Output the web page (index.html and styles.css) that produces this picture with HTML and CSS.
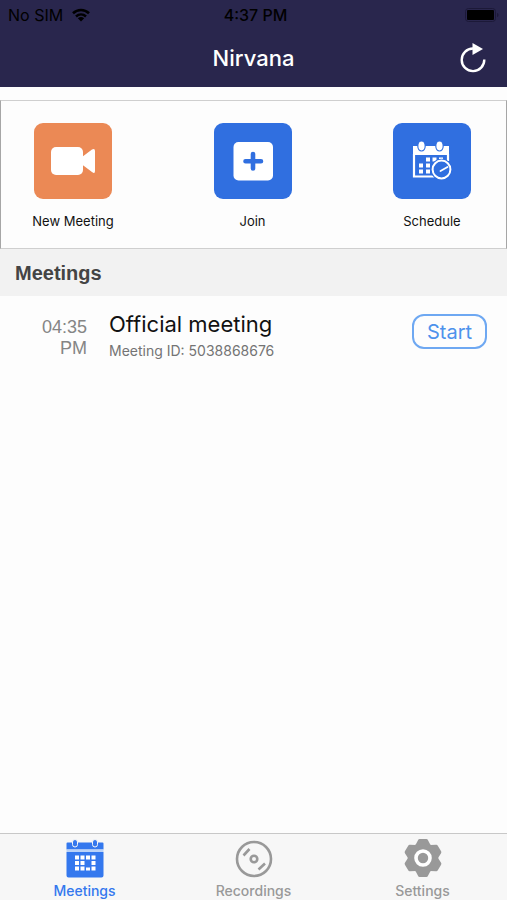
FILE: index.html
```html
<!DOCTYPE html>
<html lang="en">
<head>
<meta charset="utf-8">
<meta name="viewport" content="width=device-width, initial-scale=1">
<title>Nirvana</title>
<link rel="stylesheet" href="styles.css">
</head>
<body>
<header class="header">
  <div class="status">
    <div class="carrier">
      <span>No SIM</span>
      <svg width="20" height="14" viewBox="0 0 20 14" aria-hidden="true">
        <path d="M2 5.2C6.6 .9 13.4 .9 18 5.2M5 8.4c3-2.6 7-2.6 10 0" fill="none" stroke="#000" stroke-width="2.6"/>
        <path d="M6.8 10.2c2-1.5 4.400-1.500 6.400 0L10 13.500z"/>
      </svg>
    </div>
    <span class="clock">4:37 PM</span>
    <svg class="battery" width="34" height="14" viewBox="0 0 34 14" aria-hidden="true">
      <rect x=".5" y=".5" width="30" height="13" rx="3" fill="none" stroke="#1c1938"/>
      <rect x="2" y="2" width="27" height="10" rx="1"/>
      <path d="M32 5c2 .5 2 3.500 0 4z" fill="#1c1938"/>
    </svg>
  </div>
  <div class="titlebar">
    <h1 class="title">Nirvana</h1>
    <button class="refresh" type="button" aria-label="Refresh">
      <svg width="28" height="32" viewBox="0 0 28 32" aria-hidden="true">
        <path d="M14 6.500A11.300 11.300 0 1 0 25.300 17.500" fill="none" stroke="#fff" stroke-width="2.400"/>
        <path d="M13.500 1v12L24 7z" fill="#fff"/>
      </svg>
    </button>
  </div>
</header>
<main class="main">
  <div class="actions">
    <button class="action" type="button">
      <svg class="tile tile-new" viewBox="0 0 78 76" aria-hidden="true">
        <rect x="17" y="24" width="32" height="28" rx="5" fill="#fff"/>
        <path d="M48 34L58 26.500Q61 25 61 28V48Q61 51.500 58 49L48 41.500z" fill="#fff"/>
      </svg>
      <span>New Meeting</span>
    </button>
    <button class="action" type="button">
      <svg class="tile" viewBox="0 0 78 76" aria-hidden="true">
        <rect x="19.500" y="19" width="39.500" height="38.500" rx="5" fill="#fff"/>
        <path d="M39 31v14.500M31.500 38.200h15.500" stroke="#306fe0" stroke-width="4.600" stroke-linecap="round"/>
      </svg>
      <span>Join</span>
    </button>
    <button class="action" type="button">
      <svg class="tile" viewBox="0 0 78 76" aria-hidden="true">
        <path d="M20 23h36v9H20z" fill="#fff"/>
        <path d="M21 31v22.500h22M55 31v7" fill="none" stroke="#fff" stroke-width="2.200"/>
        <g fill="#fff" stroke="#306fe0" stroke-width="1.200"><ellipse cx="28.500" cy="23" rx="3.700" ry="5"/><ellipse cx="46.500" cy="23" rx="3.700" ry="5"/></g>
        <path d="M33 34.500h4v4h-4zM39.500 34.500h4v4h-4zM46 34.500h4v3h-4zM26 40.500h4v4h-4zM33 40.500h4v4h-4zM26 46.500h4v4h-4zM33 46.500h4v4h-4z" fill="#fff"/>
        <circle cx="48.500" cy="46.500" r="10.800" fill="#306fe0"/>
        <circle cx="48.500" cy="46.500" r="8.900" fill="none" stroke="#fff" stroke-width="2"/>
        <path d="M47.500 48l7-4" stroke="#fff" stroke-width="1.800" stroke-linecap="round"/>
      </svg>
      <span>Schedule</span>
    </button>
  </div>
  <h2 class="section">Meetings</h2>
  <div class="meeting">
    <time class="time">04:35 PM</time>
    <div class="info">
      <div class="name">Official meeting</div>
      <div class="meeting-id">Meeting ID: 5038868676</div>
    </div>
    <button class="start" type="button">Start</button>
  </div>
</main>
<nav class="tabs">
  <a class="tab active" href="#meetings">
    <svg width="38" height="40" viewBox="0 0 38 40" aria-hidden="true">
      <path d="M.5 4.500q0-1 1-1h35q1 0 1 1v6H.5zM.5 13h37v23.500q0 2-2 2h-33q-2 0-2-2z" fill="#3478ee"/>
      <path d="M.5 10.500h37V13H.5z" fill="#b9d2f8"/>
      <g fill="#3478ee" stroke="#f7f7f7"><rect x="6.500" y=".5" width="5" height="7.500" rx="2.500"/><rect x="26.500" y=".5" width="5" height="7.500" rx="2.500"/></g>
      <path d="M9 16.500h4v4H9zM14.500 16.500h4v4h-4zM20 16.500h4v4h-4zM25.500 16.500h4v4h-4zM9 22h4v4H9zM14.500 22h4v4h-4zM25.500 22h4v4h-4zM9 27.500h4v4H9zM14.500 27.500h4v4h-4zM20 28.500h4v3h-4zM25.500 27.500h4v4h-4z" fill="#fff"/>
    </svg>
    <span>Meetings</span>
  </a>
  <a class="tab" href="#recordings">
    <svg width="38" height="40" viewBox="0 0 38 40" aria-hidden="true">
      <g fill="none" stroke="#999" stroke-width="2.600"><circle cx="19" cy="20" r="17"/><circle cx="19" cy="20" r="3.300"/><path d="M8.500 16.500l6-6.500M23.500 30.500l6.500-6"/></g>
    </svg>
    <span>Recordings</span>
  </a>
  <a class="tab" href="#settings">
    <svg width="38" height="40" viewBox="0 0 38 40" aria-hidden="true">
      <defs><path id="tooth" d="M11.500 6L14 1.200q.4-1.200 1.700-1.200h6.600q1.300 0 1.700 1.200L26.500 6z"/></defs>
      <g fill="#999">
        <circle cx="19" cy="19" r="15.200"/>
        <use href="#tooth"/>
        <use href="#tooth" transform="rotate(60 19 19)"/>
        <use href="#tooth" transform="rotate(120 19 19)"/>
        <use href="#tooth" transform="rotate(180 19 19)"/>
        <use href="#tooth" transform="rotate(240 19 19)"/>
        <use href="#tooth" transform="rotate(300 19 19)"/>
      </g>
      <circle cx="19" cy="19" r="7" fill="none" stroke="#fff" stroke-width="3.600"/>
    </svg>
    <span>Settings</span>
  </a>
</nav>
</body>
</html>
```
FILE: styles.css
```css
* {
  box-sizing: border-box;
}

body {
  margin: 0;
  min-height: 100vh;
  display: flex;
  flex-direction: column;
  background: #fdfdfd;
  color: #111;
  font-family: Inter, "Liberation Sans", sans-serif;
}

button {
  margin: 0;
  padding: 0;
  border: 0;
  background: none;
  color: inherit;
  font: inherit;
}

svg {
  display: block;
}

.header {
  background: #29264d;
  color: #fff;
}

.status {
  display: grid;
  grid-template-columns: 1fr auto 1fr;
  align-items: center;
  height: 30px;
  padding: 0 8px;
  color: #000;
  font-size: 16px;
}

.carrier {
  display: flex;
  align-items: center;
  gap: 8px;
}

.clock {
  padding-left: 4px;
  font-weight: 500;
}

.battery {
  justify-self: end;
}

.titlebar {
  display: grid;
  grid-template-columns: 1fr auto 1fr;
  align-items: center;
  height: 57px;
  padding: 0 20px 2px;
}

.title {
  grid-column: 2;
  margin: 0;
  font-size: 22px;
  line-height: 28px;
  font-weight: 500;
}

.refresh {
  justify-self: end;
}

.main {
  flex: 1;
  padding-top: 13px;
}

.actions {
  display: flex;
  justify-content: space-between;
  padding: 22px 25px 17px 23px;
  border: 1px solid #a6a6a6;
  border-top-color: #cfcfcf;
  border-bottom-color: #cfcfcf;
}

.action {
  display: flex;
  flex-direction: column;
  align-items: center;
  gap: 12px;
  width: 98px;
  font-size: 13px;
  line-height: 20px;
  white-space: nowrap;
}

.tile {
  width: 78px;
  height: 76px;
  border-radius: 9px;
  background: #306fe0;
}

.tile-new {
  background: #eb8955;
}

.section {
  margin: 0;
  padding: 12px 15px 11px;
  background: #f2f2f2;
  color: #444;
  font: bold 20px/24px "Liberation Sans", sans-serif;
}

.meeting {
  display: flex;
  align-items: flex-start;
  gap: 22px;
  padding: 14px 20px 14px 32px;
}

.time {
  width: 55px;
  padding-top: 7px;
  color: #858585;
  font: 18px/21px "Liberation Sans", sans-serif;
  text-align: right;
}

.info {
  flex: 1;
}

.name {
  font-size: 22px;
  line-height: 28px;
}

.meeting-id {
  color: #747474;
  font-size: 14px;
  line-height: 26px;
}

.start {
  width: 75px;
  height: 35px;
  margin-top: 4px;
  border: 2px solid #6ea8f2;
  border-radius: 12px;
  color: #4d92ec;
  font-size: 20px;
}

.tabs {
  display: flex;
  padding: 5px 0 0;
  border-top: 1px solid #c8c8c8;
  background: #f7f7f7;
}

.tab {
  flex: 1;
  display: flex;
  flex-direction: column;
  align-items: center;
  gap: 2px;
  color: #999;
  font-size: 14px;
  line-height: 19px;
  font-weight: 500;
  text-decoration: none;
}

.tab svg {
  overflow: visible;
}

.active {
  color: #3478ee;
}
```
